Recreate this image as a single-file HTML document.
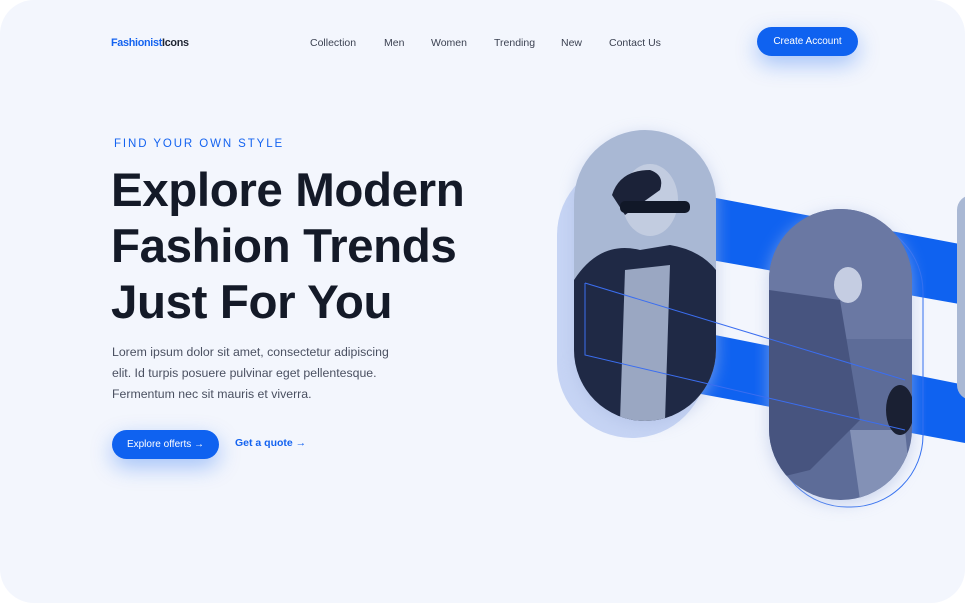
<!DOCTYPE html>
<html><head><meta charset="utf-8"><style>
html,body{margin:0;padding:0;background:#fff;}
.page{position:relative;width:965px;height:603px;background:#f3f6fd;border-radius:34px;overflow:hidden;font-family:"Liberation Sans",sans-serif;}
.logo{position:absolute;left:111px;top:37px;font-size:10.8px;font-weight:bold;color:#1f2533;letter-spacing:-0.3px}
.logo span{color:#1463f0}
.nav a{position:absolute;top:37px;font-size:10.5px;color:#3c4252;text-decoration:none}
.btn{position:absolute;background:#0f62f0;color:#fff;border-radius:16px;font-size:10px;display:flex;align-items:center;justify-content:center;box-shadow:0 8px 22px rgba(15,98,240,.35)}
.eyebrow{position:absolute;left:114px;top:138px;font-size:11.5px;letter-spacing:1.9px;color:#1463f0}
h1{position:absolute;left:111px;top:163px;margin:0;font-size:47.5px;line-height:56px;font-weight:bold;color:#141a28;letter-spacing:-0.4px}
p{position:absolute;left:112px;top:342px;margin:0;font-size:12.3px;line-height:21px;color:#4a5061}
.quote{position:absolute;left:235px;top:437px;font-size:10.5px;font-weight:bold;color:#1463f0}
</style></head><body><div class="page">
<div class="logo"><span>Fashionist</span>Icons</div>
<div class="nav"><a style="left:310px">Collection</a><a style="left:384px">Men</a><a style="left:431px">Women</a><a style="left:494px">Trending</a><a style="left:561px">New</a><a style="left:609px">Contact Us</a></div>
<div class="btn" style="left:757px;top:27px;width:101px;height:29px">Create Account</div>
<div class="eyebrow">FIND YOUR OWN STYLE</div>
<h1>Explore Modern<br>Fashion Trends<br>Just For You</h1>
<p>Lorem ipsum dolor sit amet, consectetur adipiscing<br>elit. Id turpis posuere pulvinar eget pellentesque.<br>Fermentum nec sit mauris et viverra.</p>
<div class="btn" style="left:112px;top:430px;width:107px;height:29px">Explore offerts →</div>
<div class="quote">Get a quote →</div>
<svg style="position:absolute;left:0;top:0" width="965" height="603">
<defs>
<clipPath id="c1"><rect x="574" y="130" width="142" height="291" rx="71"/></clipPath>
<clipPath id="c2"><rect x="769" y="209" width="143" height="291" rx="71"/></clipPath>
<filter id="sh"><feGaussianBlur stdDeviation="8"/></filter>
</defs>
<polygon points="700,195 965,245 965,305 700,258" fill="#0f62f0"/>
<polygon points="690,330 965,385 965,443 690,392" fill="#0f62f0"/>
<rect x="557" y="160" width="150" height="278" rx="75" fill="#c6d4f4"/>
<rect x="574" y="134" width="142" height="291" rx="71" fill="#aebde3" filter="url(#sh)" opacity=".6"/>
<g clip-path="url(#c1)">
<rect x="574" y="130" width="142" height="291" fill="#a9b8d4"/>
<ellipse cx="650" cy="200" rx="28" ry="36" fill="#c2cce0"/>
<path d="M612 195 Q620 170 650 170 Q665 175 660 190 L625 215 Z" fill="#1b2238"/>
<rect x="620" y="201" width="70" height="12" rx="5" fill="#111828"/>
<path d="M574 280 Q600 240 640 250 L670 245 Q700 250 716 270 L716 421 L574 421 Z" fill="#1f2945"/>
<path d="M625 270 L670 265 L665 421 L620 421 Z" fill="#9aa7c2"/>
</g>
<rect x="957" y="195" width="30" height="205" rx="15" fill="#a9b8d4"/>
<rect x="775" y="220" width="148" height="287" rx="72" fill="none" stroke="#2f6df0" stroke-width="1"/>
<rect x="769" y="213" width="143" height="291" rx="71" fill="#aebde3" filter="url(#sh)" opacity=".6"/>
<g clip-path="url(#c2)">
<rect x="769" y="209" width="143" height="291" fill="#5d6c98"/>
<rect x="769" y="209" width="143" height="130" fill="#6a78a3"/>
<path d="M769 290 L840 300 L860 420 L810 470 L769 480 Z" fill="#47547f"/>
<path d="M850 430 L905 430 L912 500 L860 500 Z" fill="#8391b6"/>
<ellipse cx="900" cy="410" rx="14" ry="25" fill="#1a2033"/>
<ellipse cx="848" cy="285" rx="14" ry="18" fill="#c5cde2"/>
</g>
<polyline points="585,283 905,380" fill="none" stroke="#3b6ef0" stroke-width="1"/>
<polyline points="585,283 585,355 905,430" fill="none" stroke="#3b6ef0" stroke-width="1"/>
</svg>
</div></body></html>
